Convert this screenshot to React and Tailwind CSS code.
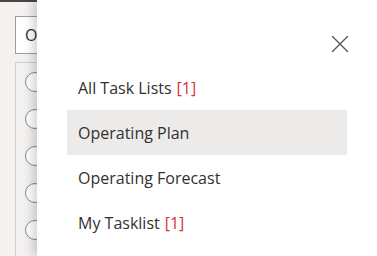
import { X } from "lucide-react";

const items = [
  { label: "All Task Lists", count: 1 },
  { label: "Operating Plan", active: true },
  { label: "Operating Forecast" },
  { label: "My Tasklist", count: 1 },
];

export default function App() {
  return (
    <div className="relative w-[377px] h-[256px] overflow-hidden bg-[#f3f2f1]" style={{ fontFamily: '"Open Sans", "Noto Sans", sans-serif' }}>
      <div className="h-[2px] bg-[#484644]" />
      <div className="px-[15px] pt-[14px]">
        <div className="h-[38px] border border-[#a19f9d] bg-white flex items-center pl-[9px] text-[16px] text-[#323130]">O</div>
        <div className="mt-[8px] h-[200px] border border-[#d2d0ce] bg-gradient-to-r from-[#f3f2f1] to-[#e6e5e4] flex flex-col gap-[17px] pt-[9px] pl-[9px]">
          {[0, 1, 2, 3, 4].map((i) => (
            <div key={i} className="w-[20px] h-[20px] rounded-full border border-[#8a8886] bg-white" />
          ))}
        </div>
      </div>

      <div className="absolute top-0 left-[37px] right-0 bottom-0 bg-white shadow-[-4px_0_10px_rgba(0,0,0,0.18)] text-[#323130]">
        <div className="flex justify-end pt-[29px] pr-[22px]">
          <X className="w-[30px] h-[30px] text-[#605e5c]" strokeWidth={1.1} />
        </div>
        <div className="mt-[6px] pl-[30px] pr-[30px] flex flex-col">
          {items.map((it) => (
            <div
              key={it.label}
              className={`h-[45px] flex items-center px-[11px] text-[16px] ${it.active ? "bg-[#edebe9]" : ""}`}
            >
              <span>{it.label}</span>
              {it.count != null && <span className="ml-[5px] text-[#d13438]">[{it.count}]</span>}
            </div>
          ))}
        </div>
      </div>
    </div>
  );
}
